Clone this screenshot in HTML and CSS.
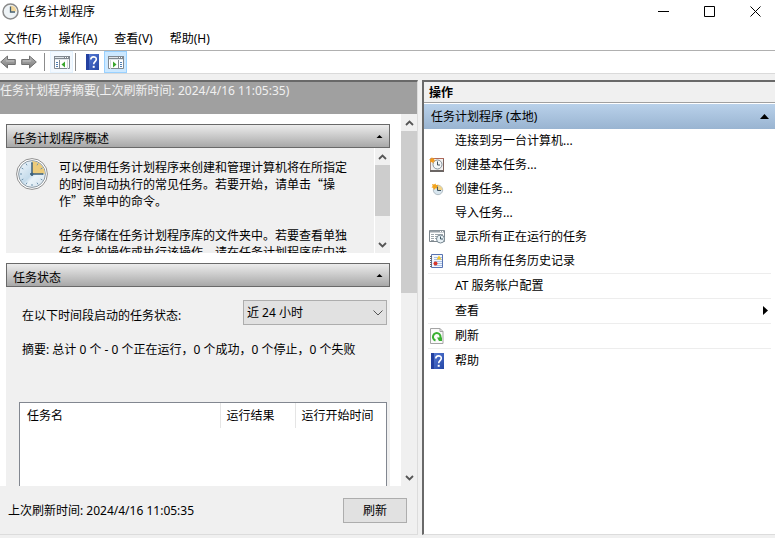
FILE: index.html
```html
<!DOCTYPE html>
<html lang="zh-CN">
<head>
    <meta charset="UTF-8">
    <meta name="viewport" content="width=device-width, initial-scale=1.0">
    <title>任务计划程序</title>
    <link rel="stylesheet" href="styles.css">
</head>
<body>
    <!-- shared icons -->
    <svg class="defs" width="0" height="0" aria-hidden="true">
        <defs>
            <linearGradient id="steel" x1="0" y1="0" x2="0" y2="1">
                <stop offset="0" stop-color="#b8b8b8"/>
                <stop offset="1" stop-color="#7c7c7c"/>
            </linearGradient>
            <linearGradient id="face" x1="0" y1="0" x2="1" y2="1">
                <stop offset="0" stop-color="#f4f9fd"/>
                <stop offset="0.5" stop-color="#c4dbeb"/>
                <stop offset="0.6" stop-color="#eaf3f9"/>
                <stop offset="1" stop-color="#d3e1eb"/>
            </linearGradient>
            <linearGradient id="blue" x1="0" y1="0" x2="1" y2="1">
                <stop offset="0" stop-color="#5b7fd8"/>
                <stop offset="1" stop-color="#2446a6"/>
            </linearGradient>
            <symbol id="clock" viewBox="0 0 32 32">
                <circle cx="16" cy="16" r="15.4" fill="#fff" stroke="#8f8f8f"/>
                <circle cx="16" cy="16" r="13.4" fill="url(#face)" stroke="#8e9aa3"/>
                <path d="M16 16V3.2A12.8 12.8 0 0 1 28.8 16z" fill="#eccb7a"/>
                <path d="M16 4v2M28 16h-2M16 28v-2M4 16h2M10 5.600l1 1.700M5.600 10l1.700 1M22 5.600l-1 1.700M26.400 10l-1.700 1M5.600 22l1.700-1M10 26.400l1-1.700M22 26.400l-1-1.700M26.400 22l-1.700-1" stroke="#6f93ad"/>
                <path d="M16 4.500V18M14 16h13" fill="none" stroke="#3e627c" stroke-width="1.500"/>
                <circle cx="16" cy="16" r="1.500" fill="#3e627c"/>
            </symbol>
            <symbol id="title-clock" viewBox="0 0 17 17">
                <circle cx="8.500" cy="8.500" r="7.500" fill="#eef3f6" stroke="#8a8a8a" stroke-width="1.500"/>
                <path d="M8.500 8.500V2.500A6 6 0 0 1 14.500 8.500z" fill="#f2d69a"/>
                <path d="M8.500 3.500v5.500h4.500" fill="none" stroke="#45606f" stroke-width="1.300"/>
            </symbol>
            <symbol id="help" viewBox="0 0 13 16">
                <path d="M0 0h13v16H0z" fill="url(#blue)"/>
                <path d="M0 0h3v16H0z" fill="#2340a0"/>
                <path d="M4.800 5.500C4.800 2 10.300 2 10.300 5.200c0 2.300-2.600 2.500-2.600 5" fill="none" stroke="#fff" stroke-width="1.600"/>
                <path d="M6.700 11.800h2v2h-2z" fill="#fff"/>
            </symbol>
            <symbol id="arrow" viewBox="0 0 16 14">
                <path d="M8.500 1L15.300 7l-6.800 6V9.500H.7v-5h7.800z" fill="url(#steel)" stroke="#707070"/>
                <path d="M2 6h8" stroke="#d8d8d8" opacity=".6"/>
            </symbol>
            <symbol id="chev-up" viewBox="0 0 9 6">
                <path d="M1 5l3.500-3.500L8 5" fill="none" stroke="#555" stroke-width="1.800"/>
            </symbol>
            <symbol id="chev-down" viewBox="0 0 9 6">
                <path d="M1 1l3.500 3.500L8 1" fill="none" stroke="#555" stroke-width="1.800"/>
            </symbol>
        </defs>
    </svg>

    <div class="window">
        <header class="titlebar">
            <svg class="app-icon" width="17" height="17"><use href="#title-clock"/></svg>
            <h1>任务计划程序</h1>
            <div class="window-buttons">
                <button aria-label="最小化"><svg width="11" height="11"><path d="M0 5.500h11" stroke="#000"/></svg></button>
                <button aria-label="最大化"><svg width="11" height="11"><path d="M.5.5h10v10H.5z" fill="none" stroke="#000"/></svg></button>
                <button aria-label="关闭"><svg width="11" height="11"><path d="M.5.5l10 10M10.500.5l-10 10" stroke="#000"/></svg></button>
            </div>
        </header>

        <nav class="menubar">
            <button>文件(F)</button>
            <button>操作(A)</button>
            <button>查看(V)</button>
            <button>帮助(H)</button>
        </nav>

        <div class="toolbar">
            <button class="nav" aria-label="后退"><svg class="flip" width="16" height="14"><use href="#arrow"/></svg></button>
            <button class="nav" aria-label="前进"><svg width="16" height="14"><use href="#arrow"/></svg></button>
            <span class="divider"></span>
            <button class="tool hover" aria-label="显示/隐藏控制台树">
                <svg width="16" height="13" viewBox="0 0 16 13">
                    <path d="M.5.5h15v12H.5z" fill="#fff" stroke="#808890"/>
                    <path d="M0 0h16v4H0z" fill="#808890"/>
                    <path d="M1 1.500h9M1 3.500h14" stroke="#dfe5ea"/>
                    <path d="M11 1.500h1M13 1.500h1" stroke="#fff"/>
                    <path d="M5.500 4v9" stroke="#808890"/>
                    <path d="M2 6.500h2M2 8.500h2M2 10.500h2" stroke="#4d7fb4"/>
                    <path d="M11 5.500v6L7.500 8.500z" fill="#3aa62c"/>
                    <path d="M13.500 4v9" stroke="#d5dadd"/>
                </svg>
            </button>
            <span class="divider"></span>
            <button class="tool" aria-label="帮助"><svg width="13" height="16"><use href="#help"/></svg></button>
            <button class="tool active" aria-label="显示/隐藏操作窗格">
                <svg width="16" height="13" viewBox="0 0 16 13">
                    <path d="M.5.5h15v12H.5z" fill="#fff" stroke="#808890"/>
                    <path d="M0 0h16v4H0z" fill="#808890"/>
                    <path d="M1 1.500h9M1 3.500h14" stroke="#dfe5ea"/>
                    <path d="M11 1.500h1M13 1.500h1" stroke="#fff"/>
                    <path d="M10.500 4v9" stroke="#808890"/>
                    <path d="M12 6.500h2M12 8.500h2M12 10.500h2" stroke="#4d7fb4"/>
                    <path d="M5 5.500v6l3.500-3z" fill="#3aa62c"/>
                    <path d="M2.500 4v9" stroke="#d5dadd"/>
                </svg>
            </button>
        </div>

        <main class="panes">
            <section class="summary">
                <h2 class="summary-title">任务计划程序摘要(上次刷新时间: 2024/4/16 11:05:35)</h2>

                <div class="summary-body">
                    <div class="cards">
                        <section class="card overview">
                            <h3 class="card-title">任务计划程序概述
                                <svg width="7" height="6"><path d="M3.500 0L6.500 3h-6z"/></svg>
                            </h3>
                            <div class="overview-body">
                                <svg class="clock" width="32" height="32"><use href="#clock"/></svg>
                                <div class="overview-text">
                                    <p>可以使用任务计划程序来创建和管理计算机将在所指定的时间自动执行的常见任务。若要开始，请单击“操作”菜单中的命令。</p>
                                    <p>任务存储在任务计划程序库的文件夹中。若要查看单独任务上的操作或执行该操作，请在任务计划程序库中选择任务。</p>
                                </div>
                                <div class="scrollbar">
                                    <button aria-label="向上滚动"><svg width="9" height="6"><use href="#chev-up"/></svg></button>
                                    <div class="track"><div class="thumb thumb-overview"></div></div>
                                    <button aria-label="向下滚动"><svg width="9" height="6"><use href="#chev-down"/></svg></button>
                                </div>
                            </div>
                        </section>

                        <section class="card status">
                            <h3 class="card-title">任务状态
                                <svg width="7" height="6"><path d="M3.500 0L6.500 3h-6z"/></svg>
                            </h3>
                            <div class="status-body">
                                <div class="period">
                                    <label for="period">在以下时间段启动的任务状态:</label>
                                    <div class="select">
                                        <select id="period">
                                            <option>近 24 小时</option>
                                        </select>
                                        <svg width="10" height="6"><path d="M.5.5L5 5 9.500.5" fill="none" stroke="#555"/></svg>
                                    </div>
                                </div>
                                <p class="totals">摘要: 总计 0 个 - 0 个正在运行，0 个成功，0 个停止，0 个失败</p>
                                <div class="task-list">
                                    <table>
                                        <thead>
                                            <tr>
                                                <th>任务名</th>
                                                <th class="col-result">运行结果</th>
                                                <th class="col-start">运行开始时间</th>
                                            </tr>
                                        </thead>
                                    </table>
                                </div>
                            </div>
                        </section>
                    </div>

                    <div class="scrollbar">
                        <button aria-label="向上滚动"><svg width="9" height="6"><use href="#chev-up"/></svg></button>
                        <div class="track"><div class="thumb thumb-summary"></div></div>
                        <button aria-label="向下滚动"><svg width="9" height="6"><use href="#chev-down"/></svg></button>
                    </div>
                </div>

                <footer class="summary-footer">
                    <span>上次刷新时间: 2024/4/16 11:05:35</span>
                    <button class="refresh">刷新</button>
                </footer>
            </section>

            <aside class="actions">
                <h2 class="actions-title">操作</h2>
                <h3 class="actions-group">任务计划程序 (本地)
                    <svg width="9" height="5"><path d="M4.500 0L9 5H0z"/></svg>
                </h3>
                <ul class="action-list">
                    <li><button><span class="icon"></span>连接到另一台计算机...</button></li>
                    <li><button><span class="icon">
                        <svg width="16" height="16" viewBox="0 0 16 16">
                            <path d="M1.500 1.500h13v13h-13z" fill="#f3f1f0" stroke="#a38c86"/>
                            <path d="M1 14h14" stroke="#6b6664" stroke-width="2"/>
                            <path d="M14.500 2v12" stroke="#7d625c"/>
                            <path d="M4 1.500h11" stroke="#b0695a"/>
                            <circle cx="8.500" cy="7.500" r="4.500" fill="#f5f7f8" stroke="#85919a"/>
                            <path d="M8.500 4.500V8H11" fill="none" stroke="#43535d"/>
                            <path d="M3 0l.7 1.700L5.700 1 5 2.900l1.700 1-1.900.6L4.200 6.500 2.900 5 1 5.600l.5-1.900L0 2.600l1.900-.5z" fill="#f39a1c"/>
                        </svg>
                    </span>创建基本任务...</button></li>
                    <li><button><span class="icon">
                        <svg width="16" height="16" viewBox="0 0 16 16">
                            <circle cx="9" cy="9" r="4.700" fill="#d8e6ef" stroke="#b3bdc4"/>
                            <path d="M9 9V4.500A4.500 4.500 0 0 1 13.500 9z" fill="#f2d48a"/>
                            <path d="M8.500 5.500v4H12" fill="none" stroke="#3f5562"/>
                            <path d="M3 3l2 .5L6.500 2.500 7 4l2.500-.3L8 5.700l.3 1.800-1.800-.3L5 9l-.8-2.300L2.500 6.500l1.200-1.400z" fill="#f2a31c"/>
                        </svg>
                    </span>创建任务...</button></li>
                    <li><button><span class="icon"></span>导入任务...</button></li>
                    <li><button><span class="icon">
                        <svg width="16" height="15" viewBox="0 0 16 15">
                            <path d="M.5 1.500h15v11H.5z" fill="#fff" stroke="#7e878e"/>
                            <path d="M1 2.500h14" stroke="#98a1a8" stroke-width="2"/>
                            <path d="M11 2.500h1M13 2.500h1" stroke="#fff"/>
                            <path d="M2 5.500h3M6 5.500h8M2 7.500h3M6 7.500h3M2 9.500h3M6 9.500h2M2 11.500h3" stroke="#9ca5ab"/>
                            <circle cx="11.500" cy="10" r="4" fill="#e8f1f6" stroke="#768690"/>
                            <path d="M11.500 7.500V10H14" fill="none" stroke="#3f5562"/>
                        </svg>
                    </span>显示所有正在运行的任务</button></li>
                    <li><button><span class="icon">
                        <svg width="16" height="16" viewBox="0 0 16 16">
                            <path d="M2.500 1.500h11v13h-11z" fill="#f3f7fd" stroke="#5874b2"/>
                            <path d="M5 4.500h8M5 6.500h8M5 8.500h8M5 10.500h8M5 12.500h8" stroke="#a9c0e4"/>
                            <path d="M1 3.500h2M1 5.500h2M1 7.500h2M1 9.500h2M1 11.500h2M1 13.500h2" stroke="#666"/>
                            <path d="M10 2.500l2.500 4h-5z" fill="#f3c42a"/>
                            <circle cx="6.500" cy="10.500" r="2" fill="#d8392c"/>
                        </svg>
                    </span>启用所有任务历史记录</button></li>
                    <li class="ruled"><button><span class="icon"></span>AT 服务帐户配置</button></li>
                    <li class="ruled"><button><span class="icon"></span>查看
                        <svg class="submenu" width="5" height="9"><path d="M0 0l5 4.500L0 9z"/></svg>
                    </button></li>
                    <li class="ruled"><button><span class="icon">
                        <svg width="14" height="16" viewBox="0 0 14 16">
                            <path d="M.5.5h9.500l3 3v12H.5z" fill="#fafafa" stroke="#a4a4a4"/>
                            <path d="M10 .5v3h3" fill="none" stroke="#a4a4a4"/>
                            <path d="M5.500 12.500A3.800 3.800 0 1 1 10.200 10.500" fill="none" stroke="#39b030" stroke-width="2"/>
                            <path d="M7 9.500h5v3.500H9z" fill="#39b030"/>
                        </svg>
                    </span>刷新</button></li>
                    <li class="ruled"><button><span class="icon"><svg width="13" height="16"><use href="#help"/></svg></span>帮助</button></li>
                </ul>
            </aside>
        </main>
    </div>
</body>
</html>
```
FILE: styles.css
```css
* {
    box-sizing: border-box;
}

body {
    margin: 0;
    background: #fff;
    color: #000;
    font-family: "Noto Sans", "Noto Sans CJK SC", sans-serif;
    font-size: 12px;
    line-height: 17px;
}

h1, h2, h3, p, ul {
    margin: 0;
    padding: 0;
    font-size: 12px;
    font-weight: normal;
}

button, select {
    margin: 0;
    padding: 0;
    border: 0;
    background: none;
    color: inherit;
    font: inherit;
}

svg {
    display: block;
    flex: none;
}

.defs {
    position: absolute;
}

.window {
    display: flex;
    flex-direction: column;
    height: 100vh;
    overflow: hidden;
}

/* title bar, menu and toolbar */
.titlebar {
    display: flex;
    align-items: center;
    height: 23px;
    padding-left: 2px;
    gap: 4px;
}

.window-buttons {
    display: flex;
    gap: 6px;
    margin-left: auto;
}

.window-buttons button {
    display: flex;
    align-items: center;
    justify-content: center;
    width: 40px;
    height: 23px;
}

.menubar {
    display: flex;
    align-items: center;
    gap: 17px;
    height: 28px;
    padding: 3px 4px 0;
    border-bottom: 1px solid #b0b0b0;
}

.toolbar {
    display: flex;
    align-items: center;
    height: 23px;
    border-bottom: 1px solid #dadada;
}

.nav {
    margin-right: 5px;
}

.flip {
    transform: scaleX(-1);
}

.divider {
    width: 1px;
    height: 18px;
    margin: 0 5px 0 2px;
    background: #8c8c8c;
}

.tool {
    display: flex;
    align-items: center;
    justify-content: center;
    width: 23px;
    height: 22px;
    border: 1px solid transparent;
}

.tool.hover {
    border-color: #e5f3ff;
    background: #f3f9ff;
}

.tool.active {
    border-color: #99d1ff;
    background: #cce8ff;
}

/* panes */
.panes {
    display: grid;
    grid-template-columns: minmax(0, 422fr) minmax(0, 353fr);
    flex: 1;
    min-height: 0;
    padding: 6px 0 3px;
    background: #f0f0f0;
}

.summary {
    display: flex;
    flex-direction: column;
    min-height: 0;
    margin-right: 4px;
    border-top: 2px solid #696969;
    border-right: 1px solid #dcdcdc;
    border-bottom: 1px solid #dcdcdc;
}

.summary-title {
    height: 32px;
    background: #a0a0a0;
    color: #f0f0f0;
}

.summary-body {
    display: flex;
    flex: 1;
    min-height: 0;
    background: #fff;
}

.cards {
    display: flex;
    flex-direction: column;
    flex: 1;
    gap: 10px;
    min-width: 0;
    padding: 10px 11px 0 6px;
    overflow: hidden;
}

.card {
    background: #f0f0f0;
}

.card-title {
    display: flex;
    align-items: center;
    justify-content: space-between;
    height: 24px;
    padding: 4px 6px 0;
    border: 1px solid #696969;
    background: linear-gradient(#ececec, #a8a8a8);
}

.overview-body {
    display: flex;
    height: 105px;
    overflow: hidden;
}

.clock {
    margin: 10px 11px 0 10px;
}

.overview-text {
    flex: 1;
    padding: 10px 22px 0 0;
    font-family: "Noto Sans CJK SC", sans-serif;
}

.overview-text p {
    margin-bottom: 17px;
}

.status {
    flex: 1;
}

.status-body {
    padding: 13px 3px 0 13px;
}

.period {
    display: flex;
    align-items: center;
    justify-content: space-between;
    padding-left: 3px;
}

.period label {
    padding-top: 5px;
}

.select {
    position: relative;
}

.select select {
    display: block;
    width: 144px;
    height: 25px;
    padding: 0 3px;
    border: 1px solid #adadad;
    background: #e1e1e1;
    appearance: none;
}

.select svg {
    position: absolute;
    top: 10px;
    right: 4px;
    pointer-events: none;
}

.totals {
    padding: 16px 0 44px 3px;
}

.task-list {
    height: 160px;
    border: 1px solid #828790;
    background: #fff;
}

.task-list table {
    width: 100%;
    border-collapse: collapse;
    table-layout: fixed;
}

.task-list th {
    height: 25px;
    padding: 0 6px;
    border-right: 1px solid #e5e5e5;
    font-weight: normal;
    text-align: left;
    white-space: nowrap;
}

.task-list th:first-child {
    padding-left: 7px;
}

.task-list th:last-child {
    border-right: 0;
}

.col-result {
    width: 75px;
}

.col-start {
    width: 91px;
}

/* scroll bars */
.scrollbar {
    display: flex;
    flex-direction: column;
    width: 16px;
    background: #f0f0f0;
}

.scrollbar button {
    display: flex;
    align-items: center;
    justify-content: center;
    height: 17px;
}

.overview .scrollbar {
    border-left: 1px solid #fff;
}

.track {
    flex: 1;
}

.thumb {
    background: #cdcdcd;
}

.thumb-overview {
    height: 72%;
}

.thumb-summary {
    height: 48%;
}

.summary-footer {
    display: flex;
    align-items: center;
    justify-content: space-between;
    height: 48px;
    padding: 0 10px 0 8px;
}

.refresh {
    width: 64px;
    height: 25px;
    border: 1px solid #adadad;
    background: #e1e1e1;
}

/* actions pane */
.actions {
    min-height: 0;
    border-top: 2px solid #696969;
    border-bottom: 1px solid #dcdcdc;
    border-left: 2px solid #696969;
    background: #fff;
}

.actions-title {
    height: 21px;
    padding: 2px 5px;
    border-bottom: 1px solid #a0a0a0;
    background: #f0f0f0;
    font-weight: bold;
}

.actions-group {
    display: flex;
    align-items: center;
    justify-content: space-between;
    height: 25px;
    margin-top: 1px;
    padding: 0 6px 0 7px;
    background: linear-gradient(#b9d1ea, #99b4d1);
}

.action-list {
    padding: 0 4px;
    list-style: none;
}

.action-list button {
    display: flex;
    align-items: center;
    width: 100%;
    height: 24px;
    padding-bottom: 1px;
    text-align: left;
}

.action-list .ruled {
    border-top: 1px solid #ededed;
}

.icon {
    display: flex;
    justify-content: center;
    width: 18px;
    margin-right: 9px;
}

.submenu {
    margin-left: auto;
    margin-right: 3px;
}
```
